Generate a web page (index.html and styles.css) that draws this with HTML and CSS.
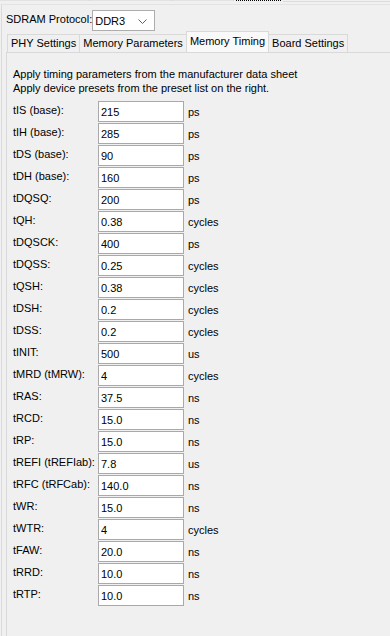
FILE: index.html
```html
<!DOCTYPE html>
<html lang="en">
<head>
  <meta charset="UTF-8">
  <meta name="viewport" content="width=device-width, initial-scale=1.0">
  <title>Memory Timing</title>
  <link rel="stylesheet" href="styles.css">
</head>
<body>
  <div class="top-strip">
    <span class="strip-tab" style="width:89px"></span>
    <span class="strip-tab" style="width:81px"></span>
    <span class="strip-tab" style="width:61px"></span>
    <span class="strip-focus"></span>
    <span class="strip-rest"></span>
  </div>
  <div class="frame">
    <div class="protocol">
      <label class="protocol-label">SDRAM Protocol:</label>
      <div class="combo">
        <span>DDR3</span>
        <svg width="9" height="5" viewBox="0 0 9 5"><path d="M0.5 0.5 L4.5 4.5 L8.5 0.5" fill="none" stroke="#606060" stroke-width="1"/></svg>
      </div>
    </div>

    <div class="tabs">
      <div class="tab">PHY Settings</div>
      <div class="tab">Memory Parameters</div>
      <div class="tab active">Memory Timing</div>
      <div class="tab">Board Settings</div>
    </div>

    <div class="pane">
      <p class="intro">Apply timing parameters from the manufacturer data sheet<br>Apply device presets from the preset list on the right.</p>
      <form class="timing">
        <label>tIS (base):</label><input type="text" value="215"><span>ps</span>
        <label>tIH (base):</label><input type="text" value="285"><span>ps</span>
        <label>tDS (base):</label><input type="text" value="90"><span>ps</span>
        <label>tDH (base):</label><input type="text" value="160"><span>ps</span>
        <label>tDQSQ:</label><input type="text" value="200"><span>ps</span>
        <label>tQH:</label><input type="text" value="0.38"><span>cycles</span>
        <label>tDQSCK:</label><input type="text" value="400"><span>ps</span>
        <label>tDQSS:</label><input type="text" value="0.25"><span>cycles</span>
        <label>tQSH:</label><input type="text" value="0.38"><span>cycles</span>
        <label>tDSH:</label><input type="text" value="0.2"><span>cycles</span>
        <label>tDSS:</label><input type="text" value="0.2"><span>cycles</span>
        <label>tINIT:</label><input type="text" value="500"><span>us</span>
        <label>tMRD (tMRW):</label><input type="text" value="4"><span>cycles</span>
        <label>tRAS:</label><input type="text" value="37.5"><span>ns</span>
        <label>tRCD:</label><input type="text" value="15.0"><span>ns</span>
        <label>tRP:</label><input type="text" value="15.0"><span>ns</span>
        <label>tREFI (tREFIab):</label><input type="text" value="7.8"><span>us</span>
        <label>tRFC (tRFCab):</label><input type="text" value="140.0"><span>ns</span>
        <label>tWR:</label><input type="text" value="15.0"><span>ns</span>
        <label>tWTR:</label><input type="text" value="4"><span>cycles</span>
        <label>tFAW:</label><input type="text" value="20.0"><span>ns</span>
        <label>tRRD:</label><input type="text" value="10.0"><span>ns</span>
        <label>tRTP:</label><input type="text" value="10.0"><span>ns</span>
      </form>
    </div>
  </div>
</body>
</html>
```

FILE: styles.css
```css
html, body {
  height: 100%;
}
body {
  margin: 0;
  background: #f0f0f0;
  font-family: "Liberation Sans", Arial, sans-serif;
  font-size: 11px;
  color: #000;
  overflow: hidden;
}
.top-strip {
  display: flex;
  height: 4px;
}
.strip-tab {
  height: 1px;
  border-right: 1px solid #d4d4d4;
  background: #e2e2e2;
}
.strip-focus {
  width: 45px;
  margin-left: 2px;
  height: 1px;
  border-top: 1px dotted #000;
}
.strip-rest {
  flex: 1;
  margin-left: 2px;
  margin-top: 1px;
  height: 1px;
  background: #dcdcdc;
}
.frame {
  margin-left: 1px;
  height: calc(100% - 5px);
  border-top: 1px solid #e3e3e3;
  border-left: 1px solid #dadada;
  padding: 5px 0 0 4px;
  display: flex;
  flex-direction: column;
}
.protocol {
  display: flex;
  align-items: flex-start;
  height: 22px;
}
.protocol-label {
  flex: 0 0 83px;
  white-space: nowrap;
  padding-top: 3px;
}
.combo {
  flex: 0 0 auto;
  width: 52px;
  height: 19px;
  border: 1px solid #adadad;
  background: #fff;
  display: flex;
  align-items: center;
  justify-content: space-between;
  padding: 0 7px 0 2px;
}
.combo svg {
  margin-top: 2px;
}
.tabs {
  display: flex;
  align-items: flex-end;
  height: 20px;
  margin-left: 1px;
}
.tab {
  height: 17px;
  line-height: 17px;
  padding: 0 3px;
  border: 1px solid #d9d9d9;
  border-bottom: none;
  margin-right: -1px;
  background: #f0f0f0;
  white-space: nowrap;
}
.tab.active {
  height: 20px;
  line-height: 18px;
  background: #f9f9f9;
  position: relative;
  z-index: 1;
}
.pane {
  flex: 1;
  border-top: 1px solid #d9d9d9;
  border-left: 1px solid #d9d9d9;
  padding: 14px 0 0 6px;
}
.intro {
  margin: 0;
  line-height: 14px;
}
.timing {
  margin-top: 6px;
  display: grid;
  grid-template-columns: 85px 86px auto;
  grid-auto-rows: 21px;
  row-gap: 1px;
  align-items: start;
}
.timing label {
  padding-top: 3px;
  white-space: nowrap;
}
.timing input {
  width: 86px;
  height: 21px;
  box-sizing: border-box;
  border: 1px solid #a9a9a9;
  background: #fff;
  font: inherit;
  padding: 0 2px;
  margin: 0;
  outline: none;
}
.timing span {
  padding: 5px 0 0 4px;
}
```
